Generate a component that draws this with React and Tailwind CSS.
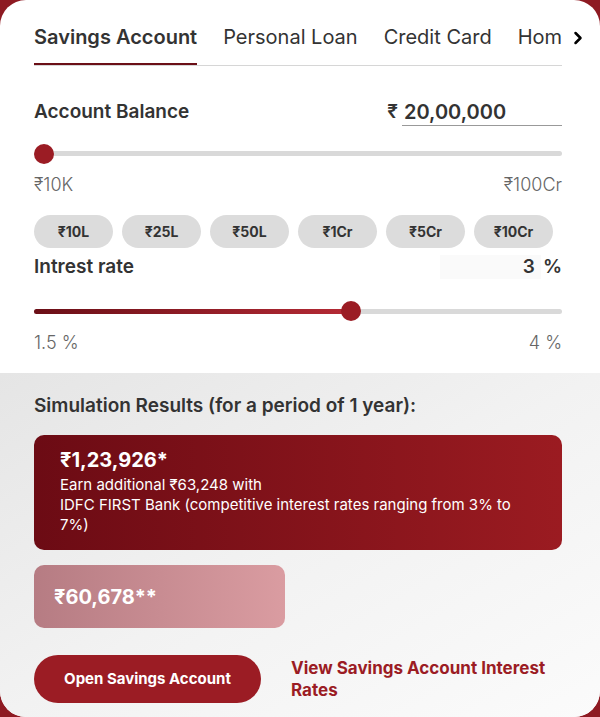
import React, { useState } from 'react';
import { ChevronRight } from 'lucide-react';

const tabs = ['Savings Account', 'Personal Loan', 'Credit Card', 'Home Loan'];
const chips = ['₹10L', '₹25L', '₹50L', '₹1Cr', '₹5Cr', '₹10Cr'];

function App() {
  const [activeTab, setActiveTab] = useState(0);
  const rate = 3;
  const ratePct = ((rate - 1.5) / (4 - 1.5)) * 100;

  return (
    <div className="min-h-screen w-full bg-[#8e1a22]" style={{ fontFamily: 'Inter, "Liberation Sans", sans-serif' }}>
      <div className="h-[717px] w-full rounded-[26px] bg-white overflow-hidden flex flex-col text-[#333]">
        {/* tabs */}
        <div className="relative pl-[34px] pr-[38px] pt-[23px]">
          <div className="flex border-b border-[#d6d6d6] overflow-hidden whitespace-nowrap">
            {tabs.map((t, i) => (
              <button
                key={t}
                onClick={() => setActiveTab(i)}
                className={`shrink-0 pb-[12px] mr-[26px] text-[20px] leading-[28px] border-b-[3px] -mb-px ${
                  activeTab === i ? 'font-semibold border-[#6b0f17] text-[#333]' : 'font-normal border-transparent text-[#333]'
                }`}
              >
                {t}
              </button>
            ))}
          </div>
          <button className="absolute right-[12px] top-[28px] bg-white">
            <ChevronRight size={20} strokeWidth={3} className="text-black" />
          </button>
        </div>

        {/* account balance */}
        <div className="pl-[34px] pr-[38px] pt-[32px]">
          <div className="flex items-center justify-between">
            <span className="text-[19px] font-semibold">Account Balance</span>
            <div className="flex items-center gap-[4px]">
              <span className="text-[19px] font-semibold">₹</span>
              <span className="w-[160px] border-b border-[#999] text-[20px] font-semibold leading-[26px] pl-[2px]">20,00,000</span>
            </div>
          </div>

          <div className="relative mt-[17px] h-[20px] flex items-center">
            <div className="h-[5px] w-full rounded-full bg-[#d9d9d9]" />
            <div className="absolute left-0 h-[20px] w-[20px] rounded-full bg-[#9b1c24]" />
          </div>

          <div className="mt-[7px] flex justify-between text-[18px] text-[#666] font-light">
            <span>₹10K</span>
            <span>₹100Cr</span>
          </div>

          <div className="mt-[17px] flex gap-[9px]">
            {chips.map((c) => (
              <button key={c} className="h-[33px] w-[79px] rounded-full bg-[#dcdcdc] text-[14px] font-bold text-[#333]">
                {c}
              </button>
            ))}
          </div>

          <div className="mt-[5px] flex items-center justify-between">
            <span className="text-[19px] font-semibold">Intrest rate</span>
            <div className="flex items-center text-[19px] font-semibold leading-[24px]">
              <span className="w-[101px] bg-[#fafafa] text-right pr-[6px]">{rate}</span>
              <span className="ml-[2px]">%</span>
            </div>
          </div>

          <div className="relative mt-[20px] h-[20px] flex items-center">
            <div className="h-[5px] w-full rounded-full bg-[#d9d9d9]" />
            <div
              className="absolute left-0 h-[5px] rounded-full bg-gradient-to-r from-[#6b0f17] to-[#b52a35]"
              style={{ width: `${ratePct}%` }}
            />
            <div
              className="absolute h-[20px] w-[20px] -ml-[10px] rounded-full bg-[#9b1c24]"
              style={{ left: `${ratePct}%` }}
            />
          </div>

          <div className="mt-[8px] flex justify-between text-[18px] text-[#666] font-light">
            <span>1.5 %</span>
            <span>4 %</span>
          </div>
        </div>

        {/* results */}
        <div className="mt-[17px] flex-1 bg-gradient-to-br from-[#e5e5e5] via-[#f2f2f2] to-[#fbfbfb] pl-[34px] pr-[38px] pt-[20px]">
          <h3 className="text-[19px] font-semibold leading-[26px]">Simulation Results (for a period of 1 year):</h3>

          <div className="mt-[16px] rounded-[10px] bg-gradient-to-r from-[#6c0b14] to-[#9b1b21] pl-[26px] pr-[40px] pt-[12px] pb-[15px] text-white">
            <div className="text-[20px] font-bold leading-[26px]">₹1,23,926*</div>
            <p className="mt-[2px] text-[15px] leading-[20px]">
              Earn additional ₹63,248 with
              <br />
              IDFC FIRST Bank (competitive interest rates ranging from 3% to 7%)
            </p>
          </div>

          <div className="mt-[15px] flex h-[63px] w-[251px] items-center rounded-[10px] bg-gradient-to-r from-[#b67c83] to-[#da9ca1] px-[20px] text-[20px] font-bold text-white">
            ₹60,678**
          </div>

          <div className="mt-[27px] flex items-center gap-[30px]">
            <button className="h-[48px] w-[227px] shrink-0 rounded-full bg-[#9b1c24] text-[15px] font-bold text-white">
              Open Savings Account
            </button>
            <a href="#" className="text-[17px] font-bold leading-[22px] text-[#9b1c24]">
              View Savings Account Interest Rates
            </a>
          </div>
        </div>
      </div>
    </div>
  );
}

export default App;
